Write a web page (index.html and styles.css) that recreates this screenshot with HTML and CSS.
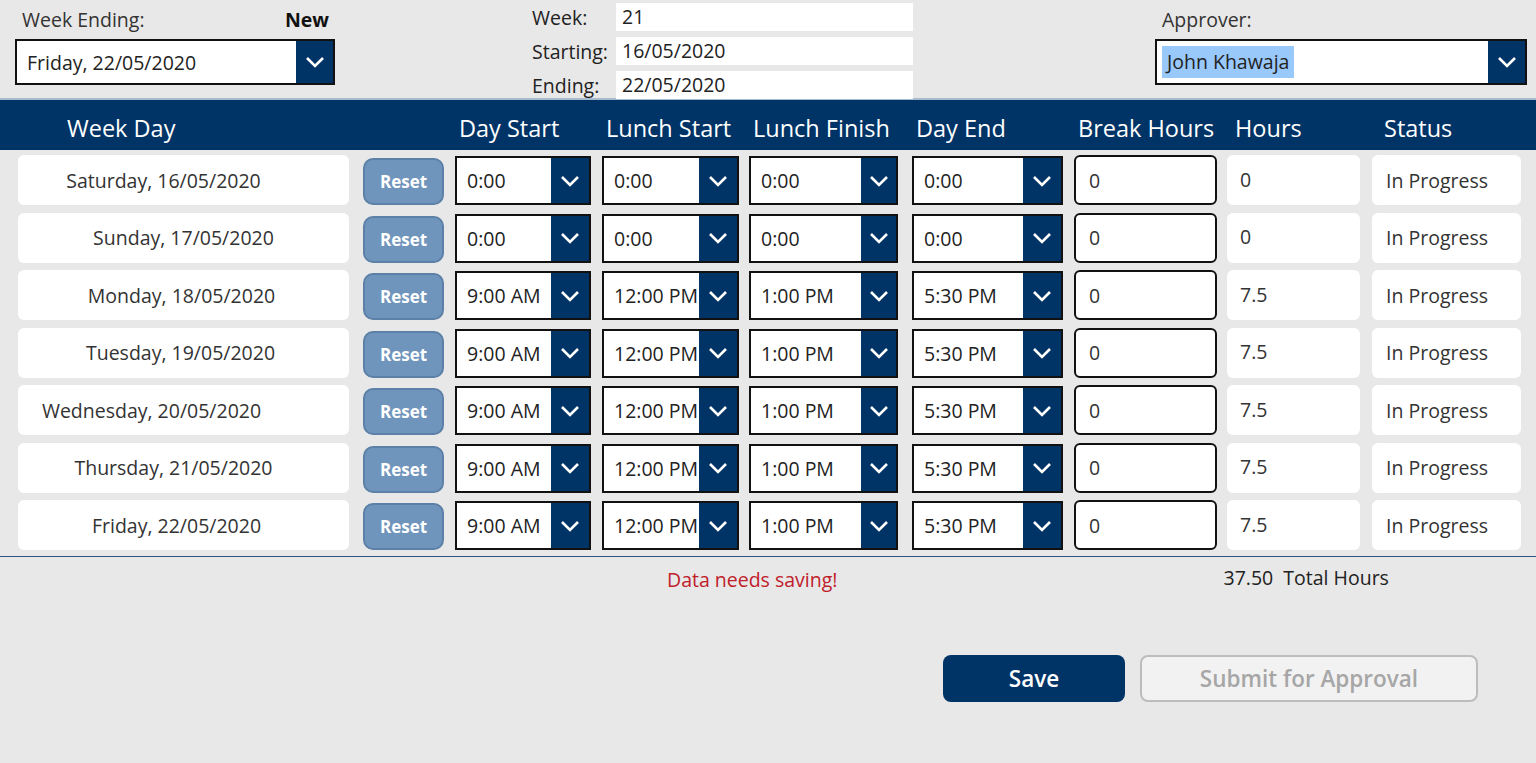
FILE: index.html
```html
<!DOCTYPE html>
<html lang="en">
<head>
<meta charset="utf-8">
<title>Timesheet</title>
<link rel="stylesheet" href="styles.css">
</head>
<body>
<div class="page">
  <section class="top">
    <div class="week-ending">
      <div class="we-labels">
        <span class="label">Week Ending:</span>
        <span class="status-new">New</span>
      </div>
      <div class="dropdown big">
        <span class="dd-text">Friday, 22/05/2020</span>
        <span class="dd-btn"><svg width="20" height="12" viewBox="0 0 20 12"><polyline points="2,2 10,10 18,2" fill="none" stroke="#fff" stroke-width="2.6"/></svg></span>
      </div>
    </div>
    <div class="week-info">
      <div class="wi-row"><span class="wi-label">Week:</span><span class="wi-box">21</span></div>
      <div class="wi-row"><span class="wi-label">Starting:</span><span class="wi-box">16/05/2020</span></div>
      <div class="wi-row"><span class="wi-label">Ending:</span><span class="wi-box">22/05/2020</span></div>
    </div>
    <div class="approver">
      <span class="label">Approver:</span>
      <div class="dropdown big wide">
        <span class="dd-text"><span class="sel">John Khawaja</span></span>
        <span class="dd-btn"><svg width="20" height="12" viewBox="0 0 20 12"><polyline points="2,2 10,10 18,2" fill="none" stroke="#fff" stroke-width="2.6"/></svg></span>
      </div>
    </div>
  </section>

  <header class="grid-head">
    <span class="h-week">Week Day</span>
    <span class="h-c">Day Start</span>
    <span class="h-c">Lunch Start</span>
    <span class="h-c">Lunch Finish</span>
    <span class="h-c">Day End</span>
    <span class="h-c">Break Hours</span>
    <span class="h-hours">Hours</span>
    <span class="h-status">Status</span>
  </header>

  <section class="rows" id="rows"></section>

  <section class="summary">
    <span class="warn">Data needs saving!</span>
    <span class="total">37.50&nbsp; Total Hours</span>
  </section>

  <section class="actions">
    <button class="btn save">Save</button>
    <button class="btn submit">Submit for Approval</button>
  </section>
</div>
<script src="app.js"></script>
</body>
</html>
```

FILE: app.js
```js
const days = [
  ["Saturday, 16/05/2020", "0:00", "0:00", "0:00", "0:00", "0", 40],
  ["Sunday, 17/05/2020", "0:00", "0:00", "0:00", "0:00", "0", 0],
  ["Monday, 18/05/2020", "9:00 AM", "12:00 PM", "1:00 PM", "5:30 PM", "7.5", 4],
  ["Tuesday, 19/05/2020", "9:00 AM", "12:00 PM", "1:00 PM", "5:30 PM", "7.5", 6],
  ["Wednesday, 20/05/2020", "9:00 AM", "12:00 PM", "1:00 PM", "5:30 PM", "7.5", 64],
  ["Thursday, 21/05/2020", "9:00 AM", "12:00 PM", "1:00 PM", "5:30 PM", "7.5", 20],
  ["Friday, 22/05/2020", "9:00 AM", "12:00 PM", "1:00 PM", "5:30 PM", "7.5", 14]
];
const chev = '<svg width="20" height="12" viewBox="0 0 20 12"><polyline points="2,2 10,10 18,2" fill="none" stroke="#fff" stroke-width="2.6"/></svg>';
const dd = (v, cls) => `<div class="dropdown cell ${cls}"><span class="dd-text">${v}</span><span class="dd-btn">${chev}</span></div>`;
const rows = document.getElementById("rows");
rows.innerHTML = days.map(d => `
  <div class="row">
    <div class="day" style="padding-right:${d[6]}px">${d[0]}</div>
    <button class="reset">Reset</button>
    ${dd(d[1], "c1")}${dd(d[2], "c2")}${dd(d[3], "c3")}${dd(d[4], "c4")}
    <div class="break">0</div>
    <div class="hours">${d[5]}</div>
    <div class="status">In Progress</div>
  </div>`).join("");
```

FILE: styles.css
```css
* { box-sizing: border-box; }
html, body { margin: 0; padding: 0; }
body {
  background: #e8e8e8;
  font-family: "Open Sans", "Liberation Sans", sans-serif;
  color: #222;
  font-size: 19.5px;
}
.page { width: 1536px; height: 763px; overflow: hidden; }

/* top */
.top {
  height: 100px;
  border-bottom: 2px solid #a7bbd0;
  display: flex;
  padding-left: 15px;
}
.label { font-size: 19.5px; color: #333; line-height: 26px; }
.week-ending { width: 320px; padding-top: 7px; }
.we-labels { display: flex; justify-content: space-between; padding: 0 6px 0 7px; height: 32px; }
.status-new { font-weight: 700; font-size: 19.5px; line-height: 26px; color: #111; }

.dropdown {
  display: flex;
  background: #fff;
  border: 2px solid #111;
  overflow: hidden;
}
.dropdown .dd-text { flex: 1; display: flex; align-items: center; white-space: nowrap; overflow: hidden; }
.dropdown .dd-btn {
  background: #003366;
  display: flex;
  align-items: center;
  justify-content: center;
}
.dropdown.big { height: 46px; }
.dropdown.big .dd-text { padding-left: 10px; font-size: 19.5px; }
.dropdown.big .dd-btn { width: 37px; }

.week-info {
  margin-left: 197px;
  padding-top: 3px;
  display: flex;
  flex-direction: column;
  gap: 6px;
}
.wi-row { display: flex; align-items: center; height: 28px; }
.wi-label { width: 84px; font-size: 19.5px; color: #222; }
.wi-box {
  width: 297px;
  height: 28px;
  background: #fff;
  padding-left: 6px;
  font-size: 19.5px;
  line-height: 28px;
}

.approver { margin-left: 242px; width: 372px; padding-top: 7px; }
.approver .label { display: block; height: 32px; padding-left: 7px; }
.dropdown.wide .dd-text { padding-left: 5px; }
.sel { background: #99c8fb; padding: 0 5px; line-height: 32px; color: #222; }

/* grid */
.grid-head, .row {
  display: grid;
  grid-template-columns: 334px 81px 136px 136px 152px 151px 142px 134px 149px;
  column-gap: 11px;
  padding-left: 18px;
}
.grid-head {
  background: #003366;
  height: 50px;
  align-items: center;
  color: #fff;
  font-size: 23.5px;
  padding-top: 5px;
}
.h-week { grid-column: 1 / span 2; padding-left: 49px; }
.h-c { padding-left: 4px; white-space: nowrap; }
.h-hours { padding-left: 8px; }
.h-status { padding-left: 12px; }

.rows {
  padding-top: 5px;
  padding-bottom: 6px;
  border-bottom: 1px solid #2f5482;
  display: flex;
  flex-direction: column;
  gap: 7.5px;
}
.row { height: 50px; }
.day {
  width: 331px;
  background: #fff;
  border-radius: 6px;
  display: flex;
  align-items: center;
  justify-content: center;
  font-size: 19.5px;
  color: #333;
}
.reset {
  margin-top: 3px;
  height: 47px;
  background: #7095bc;
  border: 2px solid #5c80a7;
  border-radius: 10px;
  color: #fff;
  font-family: inherit;
  font-weight: 700;
  font-size: 17px;
  padding: 0;
}
.dropdown.cell { margin-top: 1px; height: 49px; }
.dropdown.cell .dd-text { padding-left: 10px; font-size: 19.5px; color: #222; }
.dropdown.cell .dd-btn { width: 38px; flex: none; }
.dropdown.c2 { width: 137px; }
.dropdown.c3 { width: 149px; }
.dropdown.c3 .dd-btn { width: 35px; }
.break {
  width: 143px;
  background: #fff;
  border: 2px solid #111;
  border-radius: 6px;
  padding-left: 13px;
  display: flex;
  align-items: center;
  font-size: 19.5px;
  color: #333;
}
.hours, .status {
  background: #fff;
  border-radius: 6px;
  display: flex;
  align-items: center;
  font-size: 19.5px;
  color: #333;
}
.hours { padding-left: 13px; width: 133px; padding-bottom: 2px; }
.status { padding-left: 14px; }

/* summary */
.summary {
  display: flex;
  align-items: flex-start;
  padding-top: 7px;
  height: 98px;
}
.warn { margin-left: 667px; color: #c0202a; font-size: 19.5px; margin-top: 2px; }
.total { margin-left: 386px; font-size: 19.5px; color: #222; }

.actions {
  display: flex;
  padding-left: 943px;
  gap: 15px;
}
.btn {
  height: 47px;
  border-radius: 8px;
  font-family: inherit;
  font-weight: 600;
  font-size: 22.5px;
}
.save {
  width: 182px;
  background: #003366;
  color: #fff;
  border: none;
}
.submit {
  width: 338px;
  background: #f2f2f2;
  border: 2px solid #bdbdbd;
  color: #a6a6a6;
}
```
